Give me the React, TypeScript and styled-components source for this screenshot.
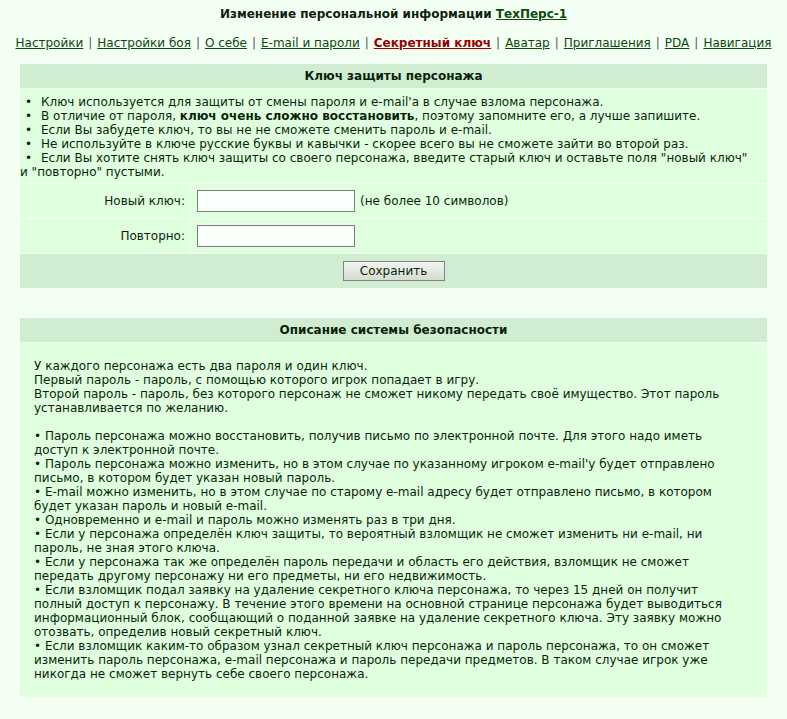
import React from "react";
import styled, { createGlobalStyle } from "styled-components";

const Global = createGlobalStyle`
  html, body {
    margin: 0;
    padding: 0;
    background: #f4fff4;
  }
  body {
    font-family: "DejaVu Sans", Verdana, sans-serif;
    font-size: 12px;
    line-height: 14px;
    color: #0c1f0c;
  }
`;

const Page = styled.div`
  padding: 7px 0 20px;
`;

const Title = styled.div`
  text-align: center;
  font-weight: bold;
  line-height: 14px;
`;

const Nav = styled.nav`
  margin-top: 15px;
  text-align: center;
  line-height: 14px;
  white-space: nowrap;
`;

const Link = styled.a<{ $active?: boolean }>`
  color: ${(p) => (p.$active ? "#990000" : "#0b4a0b")};
  font-weight: ${(p) => (p.$active ? "bold" : "inherit")};
  text-decoration: underline;
  cursor: pointer;
`;

const Sep = styled.span`
  color: #4d5a4d;
  margin: 0 5px;
`;

const Panel = styled.section<{ $top: number }>`
  margin: ${(p) => p.$top}px 20px 0;
  display: flex;
  flex-direction: column;
  gap: 1px;
`;

const PanelHead = styled.div`
  background: #d1edd1;
  height: 24px;
  line-height: 24px;
  text-align: center;
  font-weight: bold;
  color: #0a1f0a;
`;

const Body = styled.div<{ $pad: string }>`
  background: #dfffdf;
  padding: ${(p) => p.$pad};
`;

const Line = styled.div``;

const Bullet = styled.span`
  display: inline-block;
  box-sizing: border-box;
  width: 21px;
  padding-left: 5px;
`;

const Gap = styled.div`
  height: 14px;
`;

const FormRow = styled.div`
  display: grid;
  grid-template-columns: 170px 1fr;
  gap: 1px;
  height: 34px;
`;

const LabelCell = styled.div`
  background: #dfffdf;
  display: flex;
  align-items: center;
  justify-content: flex-end;
  padding-right: 5px;
`;

const FieldCell = styled.div`
  background: #dfffdf;
  display: flex;
  align-items: center;
  padding-left: 6px;
  gap: 5px;
`;

const Input = styled.input`
  box-sizing: border-box;
  width: 158px;
  height: 22px;
  border: 1px solid #7d7d7d;
  background: #fbfffb;
  margin: 0;
  padding: 1px 3px;
  font: inherit;
`;

const ButtonRow = styled.div`
  background: #d1edd1;
  height: 34px;
  display: flex;
  align-items: center;
  justify-content: center;
`;

const SaveButton = styled.button`
  box-sizing: border-box;
  width: 102px;
  height: 20px;
  border: 1px solid #877f87;
  background: linear-gradient(#f2f5f0, #d4ddd0);
  font-family: "DejaVu Sans", Verdana, sans-serif;
  font-size: 12px;
  color: #0c1f0c;
  padding: 0;
`;

const navItems = [
  "Настройки",
  "Настройки боя",
  "О себе",
  "E-mail и пароли",
  "Секретный ключ",
  "Аватар",
  "Приглашения",
  "PDA",
  "Навигация",
];

export default function App() {
  return (
    <Page>
      <Global />
      <Title>
        Изменение персональной информации <Link>ТехПерс-1</Link>
      </Title>
      <Nav>
        {navItems.map((n, i) => (
          <React.Fragment key={n}>
            {i > 0 && <Sep>|</Sep>}
            <Link $active={n === "Секретный ключ"}>{n}</Link>
          </React.Fragment>
        ))}
      </Nav>

      <Panel $top={14}>
        <PanelHead>Ключ защиты персонажа</PanelHead>
        <Body $pad="6px 10px 4px 0">
          <Line>
            <Bullet>•</Bullet>Ключ используется для защиты от смены пароля и e-mail'a в случае взлома персонажа.
          </Line>
          <Line>
            <Bullet>•</Bullet>В отличие от пароля, <b>ключ очень сложно восстановить</b>, поэтому запомните его, а лучше запишите.
          </Line>
          <Line>
            <Bullet>•</Bullet>Если Вы забудете ключ, то вы не не сможете сменить пароль и e-mail.
          </Line>
          <Line>
            <Bullet>•</Bullet>Не используйте в ключе русские буквы и кавычки - скорее всего вы не сможете зайти во второй раз.
          </Line>
          <Line>
            <Bullet>•</Bullet>Если Вы хотите снять ключ защиты со своего персонажа, введите старый ключ и оставьте поля "новый ключ" и "повторно" пустыми.
          </Line>
        </Body>
        <FormRow>
          <LabelCell>Новый ключ:</LabelCell>
          <FieldCell>
            <Input type="password" />
            <span>(не более 10 символов)</span>
          </FieldCell>
        </FormRow>
        <FormRow>
          <LabelCell>Повторно:</LabelCell>
          <FieldCell>
            <Input type="password" />
          </FieldCell>
        </FormRow>
        <ButtonRow>
          <SaveButton>Сохранить</SaveButton>
        </ButtonRow>
      </Panel>

      <Panel $top={30}>
        <PanelHead>Описание системы безопасности</PanelHead>
        <Body $pad="16px 20px 16px 14px">
          <Line>У каждого персонажа есть два пароля и один ключ.</Line>
          <Line>Первый пароль - пароль, с помощью которого игрок попадает в игру.</Line>
          <Line>
            Второй пароль - пароль, без которого персонаж не сможет никому передать своё имущество. Этот пароль устанавливается по желанию.
          </Line>
          <Gap />
          <Line>• Пароль персонажа можно восстановить, получив письмо по электронной почте. Для этого надо иметь доступ к электронной почте.</Line>
          <Line>
            • Пароль персонажа можно изменить, но в этом случае по указанному игроком e-mail'у будет отправлено письмо, в котором будет указан новый пароль.
          </Line>
          <Line>
            • E-mail можно изменить, но в этом случае по старому e-mail адресу будет отправлено письмо, в котором будет указан пароль и новый e-mail.
          </Line>
          <Line>• Одновременно и e-mail и пароль можно изменять раз в три дня.</Line>
          <Line>
            • Если у персонажа определён ключ защиты, то вероятный взломщик не сможет изменить ни e-mail, ни пароль, не зная этого ключа.
          </Line>
          <Line>
            • Если у персонажа так же определён пароль передачи и область его действия, взломщик не сможет передать другому персонажу ни его предметы, ни его недвижимость.
          </Line>
          <Line>
            • Если взломщик подал заявку на удаление секретного ключа персонажа, то через 15 дней он получит полный доступ к персонажу. В течение этого времени на основной странице персонажа будет выводиться информационный блок, сообщающий о поданной заявке на удаление секретного ключа. Эту заявку можно отозвать, определив новый секретный ключ.
          </Line>
          <Line>
            • Если взломщик каким-то образом узнал секретный ключ персонажа и пароль персонажа, то он сможет изменить пароль персонажа, e-mail персонажа и пароль передачи предметов. В таком случае игрок уже никогда не сможет вернуть себе своего персонажа.
          </Line>
        </Body>
      </Panel>
    </Page>
  );
}
